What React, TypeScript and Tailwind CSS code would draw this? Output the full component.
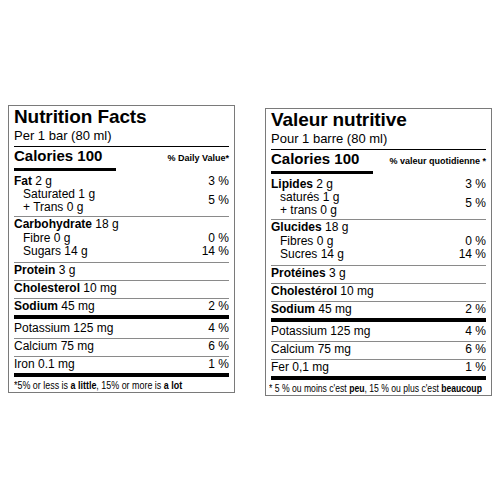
import React from 'react';

type Line = { b?: string; t?: string; indent?: boolean; dv?: string };
type Row = { lines: Line[]; dv?: string; subDv?: string; after?: 'thick' };

type Label = {
  title: string;
  serving: string;
  calories: string;
  dvHead: string;
  rows: Row[];
  note: React.ReactNode;
  noteClass: string;
};

const en: Label = {
  title: 'Nutrition Facts',
  serving: 'Per 1 bar (80 ml)',
  calories: 'Calories 100',
  dvHead: '% Daily Value*',
  rows: [
    { lines: [{ b: 'Fat', t: ' 2 g' }, { t: 'Saturated 1 g', indent: true }, { t: '+ Trans 0 g', indent: true }], dv: '3 %', subDv: '5 %' },
    { lines: [{ b: 'Carbohydrate', t: ' 18 g' }, { t: 'Fibre 0 g', indent: true, dv: '0 %' }, { t: 'Sugars 14 g', indent: true, dv: '14 %' }] },
    { lines: [{ b: 'Protein', t: ' 3 g' }] },
    { lines: [{ b: 'Cholesterol', t: ' 10 mg' }] },
    { lines: [{ b: 'Sodium', t: ' 45 mg' }], dv: '2 %', after: 'thick' },
    { lines: [{ t: 'Potassium 125 mg' }], dv: '4 %' },
    { lines: [{ t: 'Calcium 75 mg' }], dv: '6 %' },
    { lines: [{ t: 'Iron 0.1 mg' }], dv: '1 %', after: 'thick' },
  ],
  note: (
    <>
      *5% or less is <b>a little</b>, 15% or more is <b>a lot</b>
    </>
  ),
  noteClass: 'scale-x-[0.85]',
};

const fr: Label = {
  title: 'Valeur nutritive',
  serving: 'Pour 1 barre (80 ml)',
  calories: 'Calories 100',
  dvHead: '% valeur quotidienne *',
  rows: [
    { lines: [{ b: 'Lipides', t: ' 2 g' }, { t: 'saturés 1 g', indent: true }, { t: '+ trans 0 g', indent: true }], dv: '3 %', subDv: '5 %' },
    { lines: [{ b: 'Glucides', t: ' 18 g' }, { t: 'Fibres 0 g', indent: true, dv: '0 %' }, { t: 'Sucres 14 g', indent: true, dv: '14 %' }] },
    { lines: [{ b: 'Protéines', t: ' 3 g' }] },
    { lines: [{ b: 'Cholestérol', t: ' 10 mg' }] },
    { lines: [{ b: 'Sodium', t: ' 45 mg' }], dv: '2 %', after: 'thick' },
    { lines: [{ t: 'Potassium 125 mg' }], dv: '4 %' },
    { lines: [{ t: 'Calcium 75 mg' }], dv: '6 %' },
    { lines: [{ t: 'Fer 0,1 mg' }], dv: '1 %', after: 'thick' },
  ],
  note: (
    <>
      * 5 % ou moins c'est <b>peu</b>, 15 % ou plus c'est <b>beaucoup</b>
    </>
  ),
  noteClass: 'scale-x-[0.82] -ml-[2px]',
};

const Text = ({ l }: { l: Line }) => (
  <span className={l.indent ? 'pl-[9px]' : ''}>
    {l.b && <b>{l.b}</b>}
    {l.t}
  </span>
);

const Panel = ({ d, className }: { d: Label; className?: string }) => {
  const [fat, carb, ...singles] = d.rows;
  return (
    <div className={`w-[227px] border border-[#7a7a7a] bg-white px-[5px] text-black ${className ?? ''}`}>
      <div className="text-[19px] font-bold leading-[21px] tracking-[-0.1px]">{d.title}</div>
      <div className="mt-[1px] text-[13px] leading-[15px]">{d.serving}</div>
      <div className="mt-[3px] h-[1px] bg-black" />
      <div className="flex items-baseline justify-between">
        <span className="text-[15px] font-bold leading-[17px]">{d.calories}</span>
        <span className="text-[9px] font-bold">{d.dvHead}</span>
      </div>
      <div className="mt-[2px] h-[3px] w-[102px] bg-black" />

      {/* fat */}
      <div className="mt-[4px] pb-[2px] text-[12px] leading-[13.3px]">
        <div className="flex justify-between">
          <Text l={fat.lines[0]} />
          <span>{fat.dv}</span>
        </div>
        <div className="flex justify-between">
          <div className="flex flex-col">
            <Text l={fat.lines[1]} />
            <Text l={fat.lines[2]} />
          </div>
          <span className="self-center">{fat.subDv}</span>
        </div>
      </div>

      {/* carbohydrate */}
      <div className="border-t border-[#8a8a8a] pt-[1px] pb-[3px] text-[12px] leading-[13.5px]">
        {carb.lines.map((l, i) => (
          <div key={i} className="flex justify-between">
            <Text l={l} />
            <span>{l.dv}</span>
          </div>
        ))}
      </div>

      {singles.map((r, i) => {
        const prevThick = i > 0 && singles[i - 1].after === 'thick';
        return (
          <React.Fragment key={i}>
            <div
              className={`flex justify-between text-[12px] leading-[13.5px] ${
                prevThick ? 'pt-[3px]' : 'border-t border-[#8a8a8a] pt-[1px]'
              } ${r.after === 'thick' ? 'pb-[1.5px]' : 'pb-[2.5px]'}`}
            >
              <Text l={r.lines[0]} />
              <span>{r.dv}</span>
            </div>
            {r.after === 'thick' && <div className="h-[4px] bg-black" />}
          </React.Fragment>
        );
      })}

      <div className="h-[15px] pt-[2px] text-[10.5px] leading-[12px] whitespace-nowrap">
        <span className={`inline-block w-0 origin-left ${d.noteClass}`}>{d.note}</span>
      </div>
    </div>
  );
};

const App: React.FC = () => {
  return (
    <div className="flex h-[500px] w-[500px] items-start gap-[30px] bg-white pl-[8px] pt-[105px] font-['Liberation_Sans',Arial,sans-serif]">
      <Panel d={en} />
      <Panel d={fr} className="mt-[3px]" />
    </div>
  );
};

export default App;
